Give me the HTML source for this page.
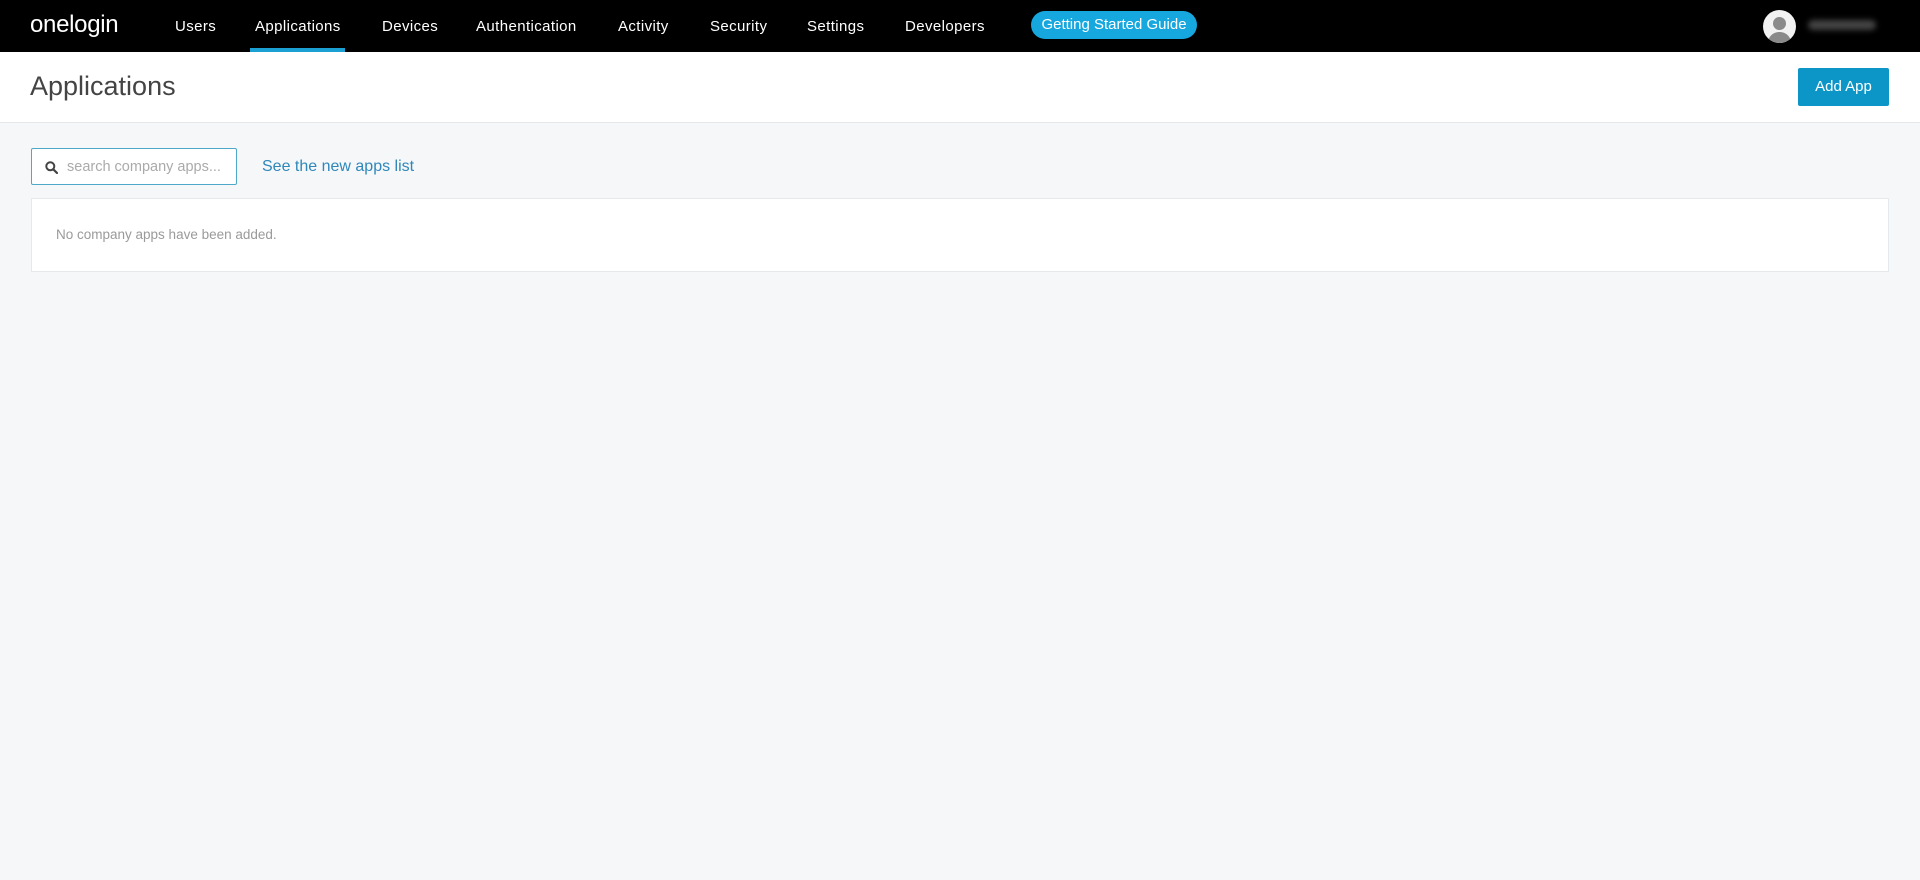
<!DOCTYPE html>
<html><head><meta charset="utf-8"><style>
*{margin:0;padding:0;box-sizing:border-box}
body{width:1920px;height:880px;background:#f5f7f9;font-family:"Liberation Sans",sans-serif;overflow:hidden;position:relative}
.nav{position:absolute;left:0;top:0;width:1920px;height:52px;background:#000}
.logo{position:absolute;left:30px;top:11px;color:#fff;font-size:24px;letter-spacing:-0.3px}
.ni{position:absolute;top:18px;color:#fff;font-size:15px;letter-spacing:0.4px}
.ul{position:absolute;left:250px;top:48px;width:95px;height:4px;background:#1ba0d4}
.pill{position:absolute;left:1031px;top:11px;width:166px;height:28px;border-radius:14px;background:#15a7de;color:#fff;font-size:15px;line-height:28px;text-align:center}
.av{position:absolute;left:1763px;top:10px;width:33px;height:33px;border-radius:50%;background:#f2f2f2;overflow:hidden}
.av .h{position:absolute;left:10px;top:7px;width:13px;height:13px;border-radius:50%;background:#8a8a8a}
.av .b{position:absolute;left:5px;top:22px;width:23px;height:16px;border-radius:11px 11px 0 0;background:#8a8a8a}
.nm{position:absolute;left:1808px;top:20px;width:68px;height:10px;background:#444;border-radius:5px;filter:blur(3px)}
.hdr{position:absolute;left:0;top:52px;width:1920px;height:71px;background:#fff;border-bottom:1px solid #e4e7ea}
.t{position:absolute;left:30px;top:19px;font-size:27px;color:#444}
.add{position:absolute;left:1798px;top:16px;width:91px;height:38px;background:#0b96c7;color:#fff;font-size:15px;line-height:38px;text-align:center;border-radius:2px}
.sr{position:absolute;left:31px;top:148px;width:206px;height:37px;border:1px solid #4ea8c9;background:#fff;border-radius:2px}
.sr span{position:absolute;left:35px;top:10px;font-size:14.5px;color:#aaa}
.lk{position:absolute;left:262px;top:158px;font-size:16px;color:#2f87ba}
.card{position:absolute;left:31px;top:198px;width:1858px;height:74px;background:#fff;border:1px solid #e6e9ec}
.card span{position:absolute;left:24px;top:28px;font-size:13.5px;color:#9a9a9a}
</style></head><body>
<div class="nav">
<div class="logo">onelogin</div>
<div class="ni" style="left:175px">Users</div>
<div class="ni" style="left:255px">Applications</div>
<div class="ni" style="left:382px">Devices</div>
<div class="ni" style="left:476px">Authentication</div>
<div class="ni" style="left:618px">Activity</div>
<div class="ni" style="left:710px">Security</div>
<div class="ni" style="left:807px">Settings</div>
<div class="ni" style="left:905px">Developers</div>
<div class="ul"></div>
<div class="pill">Getting Started Guide</div>
<div class="av"><div class="h"></div><div class="b"></div></div>
<div class="nm"></div>
</div>
<div class="hdr"><div class="t">Applications</div><div class="add">Add App</div></div>
<div class="sr"><svg style="position:absolute;left:13px;top:12px" width="13" height="13" viewBox="0 0 13 13"><circle cx="5.3" cy="5.3" r="4" fill="none" stroke="#444" stroke-width="2"/><path d="M8.3 8.3L12 12" stroke="#444" stroke-width="2.2" stroke-linecap="round"/></svg><span>search company apps...</span></div>
<div class="lk">See the new apps list</div>
<div class="card"><span>No company apps have been added.</span></div>
</body></html>
